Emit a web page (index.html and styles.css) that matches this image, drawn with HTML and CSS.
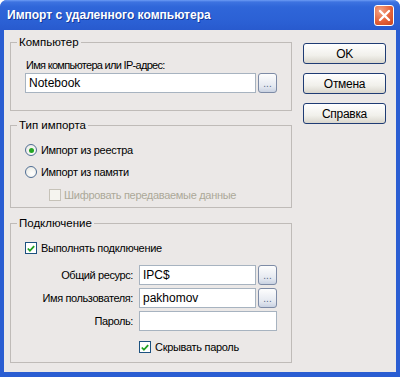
FILE: index.html
```html
<!DOCTYPE html>
<html lang="ru">
<head>
<meta charset="utf-8">
<title>Импорт с удаленного компьютера</title>
<link rel="stylesheet" href="styles.css">
</head>
<body>
<div class="window">
  <div class="titlebar">
    <span class="title">Импорт с удаленного компьютера</span>
    <span class="close"><svg width="13" height="13" viewBox="0 0 13 13"><path d="M2 2 L11 11 M11 2 L2 11" stroke="#fff" stroke-width="2.4" stroke-linecap="round"/></svg></span>
  </div>
  <div class="client">
    <div class="groups">
      <fieldset class="group g1">
        <legend>Компьютер</legend>
        <div class="label">Имя компьютера или IP-адрес:</div>
        <div class="field-row">
          <div class="input wide">Notebook</div>
          <span class="browse">...</span>
        </div>
      </fieldset>
      <fieldset class="group g2">
        <legend>Тип импорта</legend>
        <div class="opt"><span class="radio checked"></span><span>Импорт из реестра</span></div>
        <div class="opt"><span class="radio"></span><span>Импорт из памяти</span></div>
        <div class="opt sub disabled"><span class="check off"></span><span>Шифровать передаваемые данные</span></div>
      </fieldset>
      <fieldset class="group g3">
        <legend>Подключение</legend>
        <div class="opt"><span class="check"><svg width="11" height="11" viewBox="0 0 11 11"><path d="M2 5.5 L4.3 8 L9 2.8" fill="none" stroke="#21a121" stroke-width="2"/></svg></span><span>Выполнять подключение</span></div>
        <div class="form">
          <span class="flabel">Общий ресурс:</span>
          <div class="input">IPC$</div>
          <span class="browse">...</span>
          <span class="flabel">Имя пользователя:</span>
          <div class="input">pakhomov</div>
          <span class="browse">...</span>
          <span class="flabel">Пароль:</span>
          <div class="input span2"></div>
          <div class="opt formopt"><span class="check"><svg width="11" height="11" viewBox="0 0 11 11"><path d="M2 5.5 L4.3 8 L9 2.8" fill="none" stroke="#21a121" stroke-width="2"/></svg></span><span>Скрывать пароль</span></div>
        </div>
      </fieldset>
    </div>
    <div class="buttons">
      <span class="btn">OK</span>
      <span class="btn">Отмена</span>
      <span class="btn">Справка</span>
    </div>
  </div>
</div>
</body>
</html>
```
FILE: styles.css
```css
* { box-sizing: border-box; }
html, body { margin: 0; padding: 0; background: #fff; }
body { font-family: "Liberation Sans", Arial, sans-serif; font-size: 11px; color: #000; }

.window {
  width: 400px; height: 377px;
  display: flex; flex-direction: column;
  background: #2a5dd2;
  border-radius: 7px 7px 0 0;
  overflow: hidden;
}
.titlebar {
  height: 30px; flex: none;
  display: flex; align-items: center;
  padding: 0 6px 0 7px;
  background: linear-gradient(#6c9cf4 0, #3d73e0 2px, #2f66d9 7px, #2b60d4 22px, #285ace 30px);
}
.title {
  flex: 1;
  color: #fff; font-weight: bold; font-size: 12px;
  text-shadow: 1px 1px 0 #143a9c;
}
.close {
  width: 20px; height: 21px;
  border: 1px solid #fff; border-radius: 3px;
  background: radial-gradient(circle at 30% 25%, #f3a486 0, #e5633a 55%, #c8431c 100%);
  display: flex; align-items: center; justify-content: center;
}
.close svg { display: block; }

.client {
  flex: 1;
  margin: 0 4px 5px 4px;
  background: #ebe8e7;
  display: flex;
  padding: 5px 0 0 6px;
}
.groups { width: 282px; display: flex; flex-direction: column; }

.group {
  margin: 0; padding: 0 14px;
  border: 1px solid #bfbbb8;
  min-width: 0;
}
.group legend {
  padding: 0 2px; margin-left: -8px;
  line-height: 14px; font-size: 11.5px;
}
.g1 { padding-top: 9px; padding-bottom: 17px; }
.g2 { margin-top: 7px; padding-top: 10px; padding-bottom: 4px; }
.g3 { margin-top: 8px; padding-top: 10px; padding-bottom: 7px; }

.label { line-height: 14px; padding-left: 1px; letter-spacing: -0.7px; }
.field-row { display: flex; gap: 2px; margin-top: 1px; }

.input {
  height: 20px;
  border: 1px solid #a7b3c0;
  background: #fff;
  padding: 0 3px;
  font-size: 12px; line-height: 18px;
}
.input.wide { width: 231px; }

.browse {
  width: 19px; height: 20px;
  border: 1px solid #7d8ba6; border-radius: 3px;
  background: linear-gradient(#fdfdfd, #e4e8f0 70%, #c9d2e2);
  color: #5a6a88; font-size: 10px; line-height: 10px;
  display: flex; align-items: flex-end; justify-content: center;
  padding-bottom: 3px;
}

.opt { display: flex; align-items: center; height: 16px; gap: 4px; font-size: 11px; letter-spacing: -0.3px; }
.g2 .opt + .opt { margin-top: 6px; }
.g2 .opt.sub { margin-top: 7px; padding-left: 24px; gap: 3px; }
.disabled { color: #aca899; }

.radio {
  width: 12px; height: 12px; border-radius: 50%;
  border: 1px solid #4f6e94;
  background: radial-gradient(circle at 60% 65%, #fff 0, #e6e6df 100%);
  display: flex; align-items: center; justify-content: center;
}
.radio.checked::after {
  content: ""; width: 5px; height: 5px; border-radius: 50%;
  background: #24a524;
}
.check {
  width: 12px; height: 12px;
  border: 1px solid #1c5180;
  background: #fff;
  display: flex; align-items: center; justify-content: center;
}
.check svg { display: block; }
.check.off { border-color: #c6c2b8; background: #f5f4ef; }

.form {
  display: grid;
  grid-template-columns: 114px 119px 19px;
  row-gap: 3px;
  margin-top: 9px;
}
.flabel { align-self: center; text-align: right; padding-right: 6px; font-size: 11px; letter-spacing: -0.4px; }
.form .input { width: 117px; }
.form .input.span2 { grid-column: 2 / 4; width: 138px; height: 20px; }
.formopt { grid-column: 2 / 4; margin-top: 5px; gap: 4px; }

.buttons {
  margin-left: 11px; padding-top: 8px;
  display: flex; flex-direction: column; gap: 9px;
}
.btn {
  width: 83px; height: 21px;
  border: 1px solid #1f3c74; border-radius: 3px;
  background: linear-gradient(#ffffff, #f1f0eb 60%, #d9d6cd);
  display: flex; align-items: center; justify-content: center;
  font-size: 12px; letter-spacing: -0.3px;
}
```
